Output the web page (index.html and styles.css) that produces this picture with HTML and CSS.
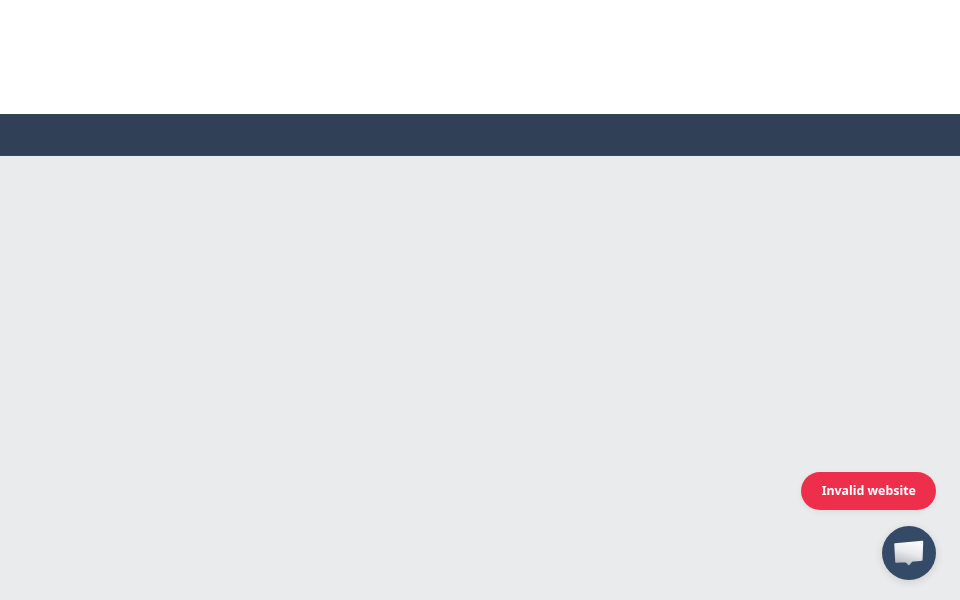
FILE: index.html
```html
<!DOCTYPE html>
<html lang="en">
<head>
<meta charset="utf-8">
<title>Invalid website</title>
<link rel="stylesheet" href="styles.css">
</head>
<body>
<header class="top"></header>
<nav class="bar"></nav>
<main class="content"></main>
<aside class="widget">
  <div class="toast">Invalid website</div>
  <button class="chat" type="button" aria-label="Chat">
    <svg width="32" height="30" viewBox="0 0 32 30">
      <defs>
        <linearGradient id="bubble" x1="0.7" y1="0" x2="0.4" y2="1">
          <stop offset="0" stop-color="#fbfbfc"/>
          <stop offset="0.5" stop-color="#e8eaec"/>
          <stop offset="1" stop-color="#b9bdc4"/>
        </linearGradient>
      </defs>
      <path d="M2 5 L29.5 2.5 L28.8 21 L18.8 22 L15.8 25.5 L12.8 22.5 L3 23 Z" fill="url(#bubble)" stroke="url(#bubble)" stroke-width="1.5" stroke-linejoin="round"/>
    </svg>
  </button>
</aside>
</body>
</html>
```
FILE: styles.css
```css
html, body {
  margin: 0;
  height: 100%;
}
body {
  display: flex;
  flex-direction: column;
  height: 600px;
  overflow: hidden;
  background: #e9ebec;
  font-family: "Noto Sans", "Open Sans", sans-serif;
}
.top {
  height: 114px;
  background: #ffffff;
}
.bar {
  height: 41px;
  background: #304157;
  border-bottom: 1px solid #3a4a60;
}
.content {
  flex: 1;
}
.widget {
  position: fixed;
  right: 24px;
  bottom: 20px;
  display: flex;
  flex-direction: column;
  align-items: flex-end;
  gap: 16px;
}
.toast {
  height: 38px;
  padding: 0 20px 0 21px;
  border-radius: 19px;
  background: #ee2f4b;
  color: #ffffff;
  font-size: 12.4px;
  font-weight: 700;
  line-height: 38px;
  white-space: nowrap;
  box-shadow: 0 2px 6px rgba(0, 0, 0, 0.06);
}
.chat {
  display: flex;
  align-items: center;
  justify-content: center;
  width: 54px;
  height: 54px;
  padding: 2px 0 0;
  border: 0;
  border-radius: 50%;
  background: #344b68;
  box-shadow: 0 2px 8px rgba(0, 0, 0, 0.12);
}
```
